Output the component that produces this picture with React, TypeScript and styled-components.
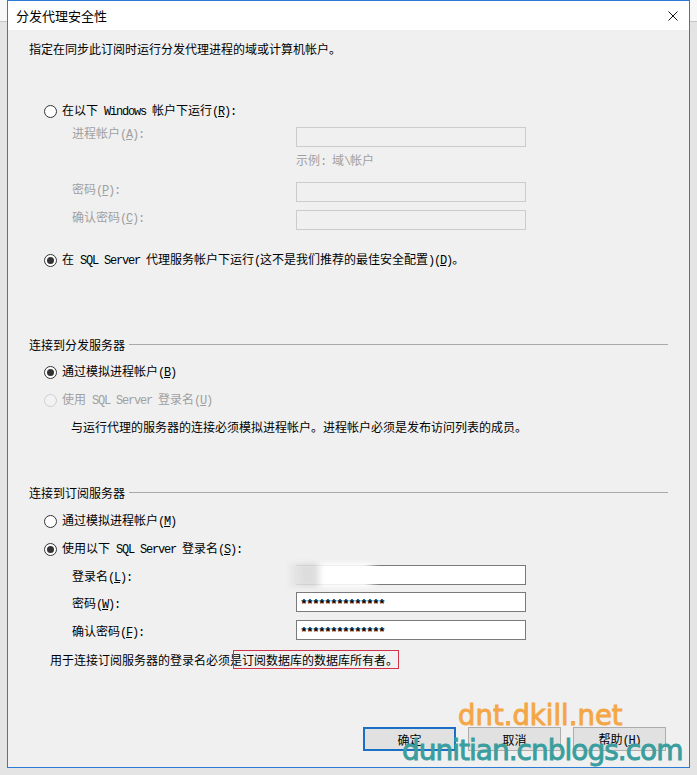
import React from "react";
import styled, { createGlobalStyle } from "styled-components";

const GlobalStyle = createGlobalStyle`
  html, body {
    margin: 0;
    padding: 0;
  }
  body {
    background: #e4e4e4;
    font-family: "Noto Sans CJK SC", sans-serif;
  }
`;

const Desktop = styled.div`
  position: relative;
  width: 697px;
  height: 775px;
  overflow: hidden;
  box-sizing: border-box;
  padding-left: 7px;
  background:
    linear-gradient(#f7f7f7, #f7f7f7) 0 0 / 100% 21px no-repeat,
    linear-gradient(#c6c6c6, #c6c6c6) 0 21px / 100% 1px no-repeat,
    #e4e4e4;
`;

const Dialog = styled.div`
  width: 683px;
  height: 768px;
  box-sizing: border-box;
  border: 1px solid #2b7bd4;
  background: #f0f0f0;
  display: flex;
  flex-direction: column;
`;

const TitleBar = styled.div`
  height: 29px;
  flex-shrink: 0;
  background: #ffffff;
  display: flex;
  align-items: center;
  justify-content: space-between;
  padding: 0 11px 0 8px;
`;

const TitleText = styled.span`
  font-size: 13px;
  color: #000;
`;

const Body = styled.div`
  display: flex;
  flex-direction: column;
  padding: 0 21px;
  font-size: 12px;
  color: #000;
`;

const Line = styled.div<{ $mt: number; $ml?: number; $muted?: boolean }>`
  display: flex;
  align-items: center;
  height: 20px;
  line-height: 20px;
  margin-top: ${(p) => p.$mt}px;
  margin-left: ${(p) => p.$ml ?? 0}px;
  color: ${(p) => (p.$muted ? "#a0a0a0" : "#000")};
  white-space: nowrap;
`;

const RadioRow = styled(Line)`
  margin-left: 15px;
  gap: 5px;
`;

const RadioDot = styled.span<{ $checked?: boolean; $disabled?: boolean }>`
  width: 13px;
  height: 13px;
  box-sizing: border-box;
  border-radius: 50%;
  border: 1px solid ${(p) => (p.$disabled ? "#cfcfcf" : "#333333")};
  background: ${(p) => (p.$disabled ? "#f2f2f2" : "#ffffff")};
  display: flex;
  align-items: center;
  justify-content: center;
  &::after {
    content: "";
    width: 7px;
    height: 7px;
    border-radius: 50%;
    background: #333333;
    display: ${(p) => (p.$checked ? "block" : "none")};
  }
`;

const FieldRow = styled.div<{ $mt: number; $muted?: boolean; $lift: number }>`
  display: flex;
  height: 20px;
  margin-top: ${(p) => p.$mt}px;
  margin-left: 43px;
  color: ${(p) => (p.$muted ? "#a0a0a0" : "#000")};
  white-space: nowrap;
  & > span:first-child {
    width: 224px;
    height: 20px;
    line-height: 20px;
    margin-top: ${(p) => -p.$lift}px;
  }
`;

const TextBox = styled.div<{ $disabled?: boolean }>`
  position: relative;
  width: 230px;
  height: 20px;
  box-sizing: border-box;
  border: 1px solid ${(p) => (p.$disabled ? "#cccccc" : "#7a7a7a")};
  background: ${(p) => (p.$disabled ? "#f0f0f0" : "#ffffff")};
  padding-left: 3px;
  display: flex;
  align-items: center;
  overflow: visible;
`;

const Stars = styled.span`
  font-family: "Liberation Mono", monospace;
  font-size: 13px;
  font-weight: bold;
  letter-spacing: -1.8px;
  height: 18px;
  line-height: 18px;
  padding-top: 3px;
  box-sizing: border-box;
`;

const Smudge = styled.span`
  position: absolute;
  left: -8px;
  top: -3px;
  width: 90px;
  height: 24px;
  background: linear-gradient(
    to right,
    #e9e9e9 0,
    #dcdcdc 18px,
    #dedede 26px,
    #ffffff 34px,
    #ffffff 76px,
    rgba(255, 255, 255, 0) 90px
  );
  filter: blur(2px);
`;

const GroupHeader = styled.div<{ $mt: number }>`
  display: flex;
  align-items: center;
  gap: 4px;
  height: 20px;
  margin-top: ${(p) => p.$mt}px;
  white-space: nowrap;
  &::after {
    content: "";
    flex: 1;
    height: 1px;
    background: #a9a9a9;
  }
`;

const Marked = styled.span`
  border: 1px solid #d3334a;
  padding: 0 0 0 8px;
  margin-left: -9px;
  line-height: 17px;
`;

const ButtonBar = styled.div`
  display: flex;
  justify-content: flex-end;
  gap: 12px;
  margin-top: 57px;
  padding-right: 2px;
`;

const Button = styled.div<{ $default?: boolean }>`
  width: 93px;
  height: 24px;
  box-sizing: border-box;
  border: ${(p) => (p.$default ? "2px solid #1a6fc7" : "1px solid #adadad")};
  background: #e1e1e1;
  display: flex;
  align-items: center;
  justify-content: center;
  font-size: 12px;
`;

const Half = styled.span`
  font-family: "Liberation Mono", monospace;
  font-size: 12px;
  letter-spacing: -1.2px;
  white-space: pre;
`;

const Key = styled.span`
  text-decoration: underline;
`;

const Watermark = styled.div<{ $color: string; $size: number; $spacing: number }>`
  position: absolute;
  font-family: "DejaVu Sans", sans-serif;
  font-size: ${(p) => p.$size}px;
  line-height: 28px;
  letter-spacing: ${(p) => p.$spacing}px;
  color: ${(p) => p.$color};
  -webkit-text-stroke: 0.9px ${(p) => p.$color};
  white-space: nowrap;
  pointer-events: none;
`;

// ASCII runs are half width (like SimSun); "&X" underlines the access key
const withKey = (s: string) =>
  s.split(/(&.)/).map((seg, i) =>
    seg.startsWith("&") ? <Key key={i}>{seg.slice(1)}</Key> : seg
  );

const T = ({ text }: { text: string }) => (
  <span>
    {text
      .split(/([\x20-\x7e]+)/)
      .filter(Boolean)
      .map((part, i) =>
        /^[\x20-\x7e]/.test(part) ? (
          <Half key={i}>{withKey(part)}</Half>
        ) : (
          <React.Fragment key={i}>{part}</React.Fragment>
        )
      )}
  </span>
);

const Radio = ({
  mt,
  text,
  checked,
  disabled,
}: {
  mt: number;
  text: string;
  checked?: boolean;
  disabled?: boolean;
}) => (
  <RadioRow $mt={mt} $muted={disabled}>
    <RadioDot $checked={checked} $disabled={disabled} />
    <T text={text} />
  </RadioRow>
);

const Close = () => (
  <svg width="10" height="10" viewBox="0 0 10 10">
    <path d="M0.5 0.5 L9.5 9.5 M9.5 0.5 L0.5 9.5" stroke="#111" strokeWidth="1" />
  </svg>
);

export default function App() {
  return (
    <Desktop>
      <GlobalStyle />
      <Dialog>
        <TitleBar>
          <TitleText>分发代理安全性</TitleText>
          <Close />
        </TitleBar>
        <Body>
          <Line $mt={9}>
            <T text="指定在同步此订阅时运行分发代理进程的域或计算机帐户。" />
          </Line>

          <Radio mt={42} text="在以下 Windows 帐户下运行(&R):" />
          <FieldRow $mt={6} $muted $lift={4}>
            <T text="进程帐户(&A):" />
            <TextBox $disabled />
          </FieldRow>
          <Line $mt={4} $ml={267} $muted>
            <T text="示例: 域\帐户" />
          </Line>
          <FieldRow $mt={11} $muted $lift={3}>
            <T text="密码(&P):" />
            <TextBox $disabled />
          </FieldRow>
          <FieldRow $mt={8} $muted $lift={3}>
            <T text="确认密码(&C):" />
            <TextBox $disabled />
          </FieldRow>
          <Radio
            mt={20}
            checked
            text="在 SQL Server 代理服务帐户下运行(这不是我们推荐的最佳安全配置)(&D)。"
          />

          <GroupHeader $mt={64}>连接到分发服务器</GroupHeader>
          <Radio mt={8} checked text="通过模拟进程帐户(&B)" />
          <Radio mt={8} disabled text="使用 SQL Server 登录名(&U)" />
          <Line $mt={7} $ml={42}>
            <T text="与运行代理的服务器的连接必须模拟进程帐户。进程帐户必须是发布访问列表的成员。" />
          </Line>

          <GroupHeader $mt={45}>连接到订阅服务器</GroupHeader>
          <Radio mt={9} text="通过模拟进程帐户(&M)" />
          <Radio mt={8} checked text="使用以下 SQL Server 登录名(&S):" />
          <FieldRow $mt={6} $lift={-1}>
            <T text="登录名(&L):" />
            <TextBox>
              <Smudge />
            </TextBox>
          </FieldRow>
          <FieldRow $mt={7} $lift={-1}>
            <T text="密码(&W):" />
            <TextBox>
              <Stars>**************</Stars>
            </TextBox>
          </FieldRow>
          <FieldRow $mt={8} $lift={-1}>
            <T text="确认密码(&F):" />
            <TextBox>
              <Stars>**************</Stars>
            </TextBox>
          </FieldRow>
          <Line $mt={10} $ml={21}>
            <span>
              用于连接订阅服务器的登录名必须是<Marked>订阅数据库的数据库所有者。</Marked>
            </span>
          </Line>

          <ButtonBar>
            <Button $default>确定</Button>
            <Button>取消</Button>
            <Button>
              <T text="帮助(&H)" />
            </Button>
          </ButtonBar>
        </Body>
      </Dialog>

      <Watermark $color="#f5a646" $size={27.5} $spacing={0} style={{ left: 458, top: 701 }}>
        dnt.dkill.net
      </Watermark>
      <Watermark $color="#3a9e9e" $size={28} $spacing={-1} style={{ left: 402, top: 737 }}>
        dunitian.cnblogs.com
      </Watermark>
    </Desktop>
  );
}
